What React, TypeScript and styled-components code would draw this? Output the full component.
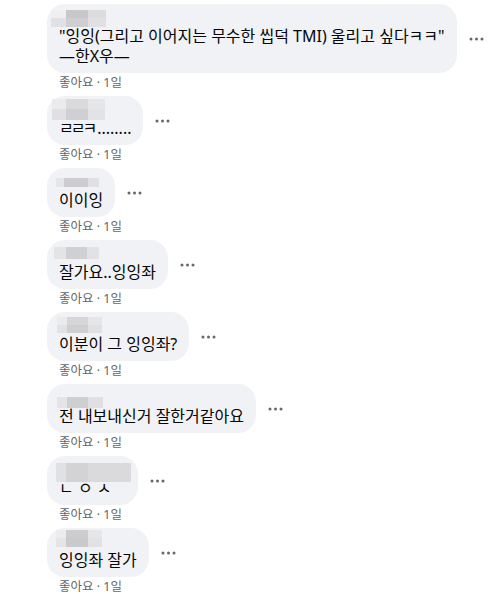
import React from "react";
import styled, { createGlobalStyle } from "styled-components";

const GlobalStyle = createGlobalStyle`
  html, body {
    margin: 0;
    padding: 0;
    background: #ffffff;
  }
  body {
    font-family: "Noto Sans", "Noto Sans CJK KR", sans-serif;
    color: #050505;
  }
`;

interface MosaicSpec {
  x: number;
  y: number;
  cols: number[];
  rows: number[];
  colors: string[][];
}

interface CommentData {
  text: React.ReactNode;
  nameWidth?: number;
  mosaic: MosaicSpec;
}

const List = styled.div`
  display: flex;
  flex-direction: column;
  padding: 4px 0 0 47px;
`;

const CommentBlock = styled.div`
  display: flex;
  flex-direction: column;
  align-items: flex-start;
`;

const Row = styled.div`
  display: flex;
  align-items: center;
`;

const Bubble = styled.div`
  background: #f0f2f5;
  border-radius: 18px;
  padding: 6px 12px 7px 12px;
  display: flex;
  flex-direction: column;
`;

const NameRow = styled.div<{ $width: number }>`
  position: relative;
  height: 16px;
  width: ${(p) => p.$width}px;
`;

const MosaicGrid = styled.div<{ $x: number; $y: number; $cols: string; $rows: string }>`
  position: absolute;
  left: ${(p) => p.$x}px;
  top: ${(p) => p.$y}px;
  display: grid;
  grid-template-columns: ${(p) => p.$cols};
  grid-template-rows: ${(p) => p.$rows};
  z-index: 2;
`;

const Cell = styled.div<{ $color: string }>`
  background: ${(p) => p.$color};
`;

const Text = styled.div`
  font-size: 16px;
  line-height: 20px;
  white-space: nowrap;
`;

// single jamo are set narrower in the original font
const Jamo = styled.span`
  letter-spacing: -3px;
  margin-right: 3px;
`;

const MoreButton = styled.div`
  margin-left: 12px;
  display: flex;
  align-items: center;
  color: #65676b;
`;

const Footer = styled.div`
  padding: 2px 0 5px 12px;
  font-size: 12.5px;
  line-height: 16px;
  color: #65676b;
`;

const Mosaic: React.FC<{ spec: MosaicSpec }> = ({ spec }) => (
  <MosaicGrid
    $x={spec.x}
    $y={spec.y}
    $cols={spec.cols.map((c) => `${c}px`).join(" ")}
    $rows={spec.rows.map((r) => `${r}px`).join(" ")}
  >
    {spec.colors.map((row, ri) =>
      row.map((c, ci) => <Cell key={`${ri}-${ci}`} $color={c} />)
    )}
  </MosaicGrid>
);

const Dots = () => (
  <svg width="15" height="4" viewBox="0 0 15 4">
    <circle cx="2" cy="2" r="1.5" fill="currentColor" />
    <circle cx="7.5" cy="2" r="1.5" fill="currentColor" />
    <circle cx="13" cy="2" r="1.5" fill="currentColor" />
  </svg>
);

const comments: CommentData[] = [
  {
    text: (
      <>
        "잉잉(그리고 이어지는 무수한 씹덕 TMI) 울리고 싶다ㅋㅋ"
        <br />
        —한X우—
      </>
    ),
    mosaic: {
      x: -8,
      y: 0,
      cols: [15, 22, 18],
      rows: [8, 9],
      colors: [
        ["#efeff1", "#c8c8cb", "#dcdcde"],
        ["#e1e1e3", "#cfcfd1", "#e0e0e2"],
      ],
    },
  },
  {
    text: (
      <>
        <Jamo>ㄹㄹㅋ</Jamo>........
      </>
    ),
    mosaic: {
      x: -7,
      y: -3,
      cols: [14, 22, 17],
      rows: [10, 11],
      colors: [
        ["#ebebed", "#dadadc", "#e6e6e8"],
        ["#e0e0e2", "#d0d0d2", "#e3e3e5"],
      ],
    },
  },
  {
    text: "이이잉",
    mosaic: {
      x: -3,
      y: 4,
      cols: [8, 24, 11],
      rows: [9],
      colors: [["#e6e6e8", "#cdcdcf", "#e0e0e2"]],
    },
  },
  {
    text: "잘가요..잉잉좌",
    mosaic: {
      x: -5,
      y: 1,
      cols: [12, 21, 12],
      rows: [12],
      colors: [["#e4e4e6", "#d0d0d2", "#e2e2e4"]],
    },
  },
  {
    text: "이분이 그 잉잉좌?",
    mosaic: {
      x: -2,
      y: -1,
      cols: [10, 21, 14],
      rows: [8, 8],
      colors: [
        ["#ebebed", "#d6d6d8", "#e6e6e8"],
        ["#e2e2e4", "#cfcfd1", "#e0e0e2"],
      ],
    },
  },
  {
    text: "전 내보내신거 잘한거같아요",
    mosaic: {
      x: -2,
      y: 7,
      cols: [10, 21, 15],
      rows: [11],
      colors: [["#e4e4e6", "#cfcfd1", "#e0e0e2"]],
    },
  },
  {
    text: "ㄴ ㅇ ㅅ",
    nameWidth: 67,
    mosaic: {
      x: -3,
      y: 1,
      cols: [10, 22, 43],
      rows: [19],
      colors: [["#e1e1e3", "#d3d3d5", "#dadadc"]],
    },
  },
  {
    text: "잉잉좌 잘가",
    mosaic: {
      x: -3,
      y: -4,
      cols: [10, 22, 14],
      rows: [8, 9],
      colors: [
        ["#ececee", "#cdcdcf", "#e6e6e8"],
        ["#e4e4e6", "#cacacc", "#e2e2e4"],
      ],
    },
  },
];

const App: React.FC = () => {
  return (
    <>
      <GlobalStyle />
      <List>
        {comments.map((c, i) => (
          <CommentBlock key={i}>
            <Row>
              <Bubble>
                <NameRow $width={c.nameWidth ?? 40}>
                  <Mosaic spec={c.mosaic} />
                </NameRow>
                <Text>{c.text}</Text>
              </Bubble>
              <MoreButton>
                <Dots />
              </MoreButton>
            </Row>
            <Footer>좋아요 · 1일</Footer>
          </CommentBlock>
        ))}
      </List>
    </>
  );
};

export default App;
